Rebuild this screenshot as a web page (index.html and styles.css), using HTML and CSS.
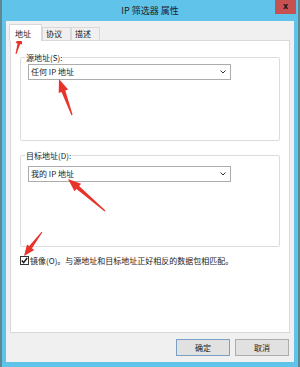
FILE: index.html
```html
<!DOCTYPE html>
<html lang="zh-CN">
<head>
<meta charset="utf-8">
<title>IP 筛选器 属性</title>
<link rel="stylesheet" href="styles.css">
</head>
<body>
<div class="window">
  <div class="titlebar">
    <div></div>
    <div class="title">IP 筛选器 属性</div>
    <div class="close-wrap"><div class="close">x</div></div>
  </div>
  <div class="client">
    <div class="tabs">
      <div class="tab active">地址</div>
      <div class="tab">协议</div>
      <div class="tab">描述</div>
    </div>
    <div class="panel">
      <fieldset class="group g1">
        <legend>源地址(S):</legend>
        <div class="combo"><span>任何 IP 地址</span><svg class="chev" width="6" height="4" viewBox="0 0 6 4"><path d="M0.5 0.5 L3 3 L5.5 0.5" fill="none" stroke="#333" stroke-width="1"/></svg></div>
      </fieldset>
      <fieldset class="group g2">
        <legend>目标地址(D):</legend>
        <div class="combo c2"><span>我的 IP 地址</span><svg class="chev" width="6" height="4" viewBox="0 0 6 4"><path d="M0.5 0.5 L3 3 L5.5 0.5" fill="none" stroke="#333" stroke-width="1"/></svg></div>
      </fieldset>
      <div class="check-row">
        <span class="checkbox"><svg width="7" height="7" viewBox="0 0 7 7"><path d="M0.8 3.6 L2.6 5.6 L6.2 1" fill="none" stroke="#1a1a1a" stroke-width="1.5"/></svg></span>
        <span class="check-label">镜像(O)。与源地址和目标地址正好相反的数据包相匹配。</span>
      </div>
    </div>
    <div class="buttons">
      <div class="btn default">确定</div>
      <div class="btn">取消</div>
    </div>
  </div>
  <svg class="arrows" width="300" height="367" viewBox="0 0 300 367">
    <polygon fill="#e8332a" points="16.5,54.1 20.2,44.0 22.3,44.6 21,36 15.5,42.8 17.6,43.4 15.5,53.9"/>
    <polygon fill="#e8332a" points="72.6,114.8 65.3,90.5 68.1,89.5 59,79 58.7,92.9 61.5,91.9 71.4,115.2"/>
    <polygon fill="#e8332a" points="105.4,210.5 79.1,186.0 81.1,183.7 68,179 74.5,191.3 76.5,189.0 104.6,211.5"/>
    <polygon fill="#e8332a" points="42.4,232.3 32.0,248.3 34.2,249.9 24,256 27.0,244.5 29.2,246.1 41.6,231.7"/>
  </svg>
</div>
</body>
</html>
```

FILE: styles.css
```css
* { box-sizing: border-box; }
html, body {
  margin: 0;
  padding: 0;
  width: 300px;
  height: 367px;
  overflow: hidden;
  font-family: "Noto Sans CJK SC", "Noto Sans", sans-serif;
  font-size: 8px;
  color: #1a1a1a;
}
.window {
  position: relative;
  width: 300px;
  height: 367px;
  background: #60c4ea;
  border-left: 2px solid #5d8a92;
  border-right: 2px solid #5d8a92;
  display: flex;
  flex-direction: column;
}
.titlebar {
  height: 21px;
  display: grid;
  grid-template-columns: 1fr auto 1fr;
  align-items: start;
}
.title {
  font-size: 9px;
  line-height: 21px;
  color: #1e1e1e;
  white-space: nowrap;
}
.close-wrap {
  display: flex;
  justify-content: flex-end;
}
.close {
  width: 21px;
  height: 14px;
  margin-right: 2px;
  background: #c75050;
  color: #1a1a1a;
  font-family: "DejaVu Sans", sans-serif;
  font-weight: bold;
  font-size: 8px;
  line-height: 13px;
  text-align: center;
}
.client {
  margin: 0 4px;
  height: 341px;
  background: #f0f0f0;
  display: flex;
  flex-direction: column;
}
.tabs {
  display: flex;
  align-items: flex-end;
  padding-top: 3px;
  margin-left: 3px;
  height: 19px;
  position: relative;
  z-index: 1;
}
.tab {
  width: 29px;
  height: 13px;
  border: 1px solid #d9d9d9;
  border-bottom: none;
  background: #f0f0f0;
  line-height: 12px;
  padding-left: 3px;
  white-space: nowrap;
}
.tab.active {
  width: 33px;
  height: 17px;
  margin-bottom: -1px;
  background: #fff;
  padding-left: 5px;
  line-height: 17px;
}
.panel {
  margin: 0 4px;
  width: 280px;
  height: 293px;
  border: 1px solid #d9d9d9;
  background: #fff;
  padding: 0 10px 0 9px;
  display: flex;
  flex-direction: column;
}
.group {
  margin: 0;
  padding: 0 7px;
  min-width: 0;
  width: 260px;
  border: 1px solid #dcdcdc;
  border-radius: 2px;
}
.group legend {
  padding: 0 1px;
  margin-left: -3px;
  line-height: 11px;
  font-size: 8px;
}
.g1 { margin-top: 11px; height: 89px; }
.g2 { margin-top: 9px; height: 97px; }
.combo {
  margin-top: 1px;
  width: 203px;
  height: 16px;
  border: 1px solid #acacac;
  background: #fff;
  display: flex;
  align-items: center;
  justify-content: space-between;
  padding: 0 4px 0 2px;
  line-height: 14px;
  white-space: nowrap;
}
.combo.c2 { margin-top: 5px; }
.chev { display: block; }
.check-row {
  margin-top: 8px;
  display: flex;
  align-items: center;
  gap: 1px;
  line-height: 11px;
  white-space: nowrap;
}
.checkbox {
  width: 9px;
  height: 9px;
  border: 1px solid #333;
  background: #fff;
  display: flex;
  align-items: center;
  justify-content: center;
}
.checkbox svg { display: block; }
.buttons {
  margin-top: 6px;
  display: flex;
  justify-content: flex-end;
  gap: 5px;
  padding-right: 5px;
}
.btn {
  width: 54px;
  height: 17px;
  background: #e1e1e1;
  border: 1px solid #adadad;
  text-align: center;
  line-height: 15px;
}
.btn.default {
  border-color: #7c9fc4;
}
.arrows {
  position: absolute;
  left: -2px;
  top: 0;
  pointer-events: none;
}
```
